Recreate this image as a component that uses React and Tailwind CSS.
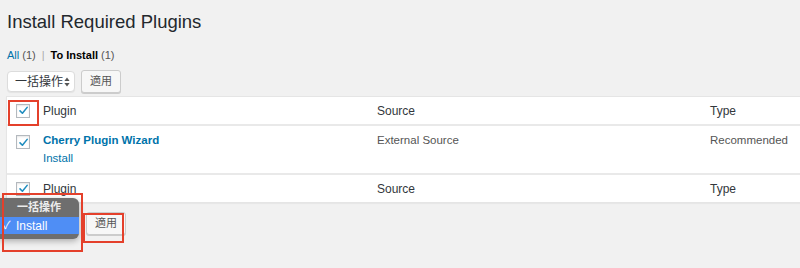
import React from 'react';

const font = { fontFamily: '"Liberation Sans", "Noto Sans CJK JP", sans-serif' };

function Checkbox() {
  return (
    <span className="flex h-[14px] w-[14px] items-center justify-center border border-[#b4b9be] bg-white shadow-[inset_0_1px_2px_rgba(0,0,0,0.1)]">
      <svg width="11" height="11" viewBox="0 0 12 12" fill="none">
        <path d="M2.2 6.4 L4.8 9 L10 2.6" stroke="#1e8cbe" strokeWidth="1.7" strokeLinecap="round" strokeLinejoin="round" />
      </svg>
    </span>
  );
}

function BulkSelect({ label }) {
  return (
    <div className="flex h-[21px] w-[68px] items-center justify-between whitespace-nowrap rounded-[4px] border border-[#dcdcdc] bg-white pl-[7px] pr-[4px] text-[12px] text-[#32373c] shadow-[0_1px_1px_rgba(0,0,0,0.06)]">
      <span>{label}</span>
      <svg width="6" height="10" viewBox="0 0 6 10" fill="#555">
        <path d="M3 0.5 L5.6 4 H0.4 Z" />
        <path d="M3 9.5 L5.6 6 H0.4 Z" />
      </svg>
    </div>
  );
}

function ApplyButton() {
  return (
    <button className="flex h-[23px] w-[40px] items-center justify-center rounded-[3px] border border-[#cccccc] bg-[#f7f7f7] text-[11px] text-[#555] shadow-[0_1px_0_#ccc]">
      適用
    </button>
  );
}

function HeadRow({ border }) {
  return (
    <div className={`flex h-[29px] items-center text-[12px] text-[#32373c] ${border}`}>
      <div className="flex w-[36px] justify-start pl-[9px]">
        <Checkbox />
      </div>
      <div className="w-[334px]">Plugin</div>
      <div className="w-[333px]">Source</div>
      <div className="flex-1">Type</div>
    </div>
  );
}

export default function App() {
  return (
    <div className="relative h-[268px] w-[800px] overflow-hidden bg-[#f1f1f1]" style={font}>
      <h1 className="ml-[7px] mt-[10px] text-[18.5px] leading-[24px] font-normal text-[#23282d]">
        Install Required Plugins
      </h1>

      <div className="ml-[7px] mt-[13px] flex items-center text-[11px] leading-[16px] text-[#555]">
        <span className="text-[#0073aa]">All</span>
        <span className="ml-[3px]">(1)</span>
        <span className="mx-[6px] text-[#aaa]">|</span>
        <span className="font-bold text-[#000]">To Install</span>
        <span className="ml-[3px]">(1)</span>
      </div>

      <div className="ml-[7px] mt-[7px] flex items-center gap-[6px]">
        <BulkSelect label="一括操作" />
        <ApplyButton />
      </div>

      {/* List table */}
      <div className="ml-[6px] mt-[3px] w-[830px] border border-[#e5e5e5] bg-white shadow-[0_1px_1px_rgba(0,0,0,0.04)]">
        <HeadRow border="border-b-[2px] border-[#e9e9e9]" />
        <div className="flex h-[47px] text-[11.5px]">
          <div className="flex w-[36px] pl-[9px] pt-[9px]">
            <Checkbox />
          </div>
          <div className="w-[334px] pt-[5px] leading-[18px]">
            <div className="font-bold text-[#0073aa]">Cherry Plugin Wizard</div>
            <div className="text-[#0073aa]">Install</div>
          </div>
          <div className="w-[333px] pt-[5px] leading-[18px] text-[#555]">External Source</div>
          <div className="flex-1 pt-[5px] leading-[18px] text-[#555]">Recommended</div>
        </div>
        <HeadRow border="border-t-[2px] border-[#e9e9e9]" />
      </div>

      <div className="ml-[7px] mt-[9px] flex items-center gap-[11px]">
        <BulkSelect label="" />
        <ApplyButton />
      </div>

      {/* native select popup */}
      <div className="absolute left-0 top-[198px] h-[41px] w-[79px] rounded-r-[6px] bg-[#6e6e6e] text-white shadow-[0_2px_6px_rgba(0,0,0,0.3)]">
        <div className="flex h-[19px] items-center pl-[17px] text-[11px] font-bold text-[#ececec]">一括操作</div>
        <div className="flex h-[17px] items-center bg-[#4f8ef5] text-[12px]">
          <span className="w-[16px] pl-[3px] text-[11px]">✓</span>
          <span>Install</span>
        </div>
      </div>

      {/* highlight boxes */}
      <div className="absolute left-[8px] top-[100px] h-[26px] w-[31px] border-2 border-[#e4402b]" />
      <div className="absolute left-[2px] top-[193px] h-[59px] w-[81px] border-2 border-[#e4402b]" />
      <div className="absolute left-[83px] top-[213px] h-[30px] w-[41px] border-2 border-[#e4402b]" />
    </div>
  );
}
